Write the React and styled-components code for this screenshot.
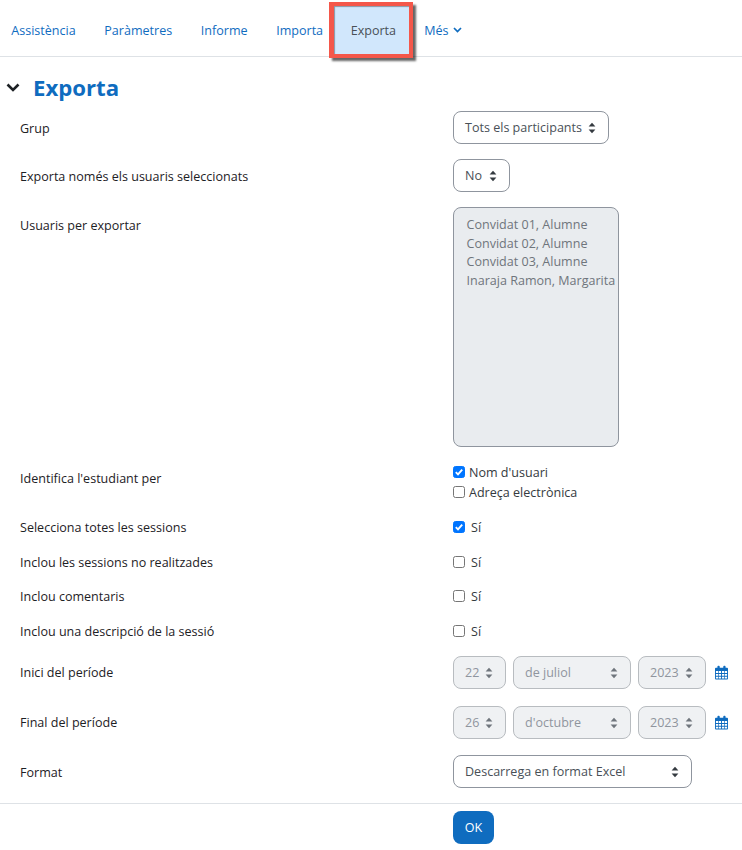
import React from 'react';
import styled, { createGlobalStyle } from 'styled-components';

const GlobalStyle = createGlobalStyle`
	html, body {
		margin: 0;
		padding: 0;
		background: #fff;
	}
	body {
		font-family: "Open Sans", "Liberation Sans", sans-serif;
		font-size: 12.55px;
		color: #1d2125;
	}
`;

const Page = styled.div`
	width: 742px;
	height: 850px;
	overflow: hidden;
`;

const Nav = styled.nav`
	display: flex;
	align-items: stretch;
	height: 57px;
	box-sizing: border-box;
	border-bottom: 1px solid #dee2e6;
`;

const Tab = styled.a`
	display: flex;
	align-items: center;
	gap: 5px;
	padding: 4px 14.3px 0 ${(p) => p.$left || 14.3}px;
	color: #0f6cbf;
	white-space: nowrap;
`;

const ActiveTab = styled(Tab)`
	justify-content: center;
	box-sizing: border-box;
	width: 84px;
	height: 56px;
	margin: 2px -3.5px 0 -8px;
	padding: 0 0 0 3px;
	background: #d1e7fc;
	border: 4px solid #f4574a;
	border-left-width: 5px;
	box-shadow: 3px 3px 2px rgba(0, 0, 0, 0.6), inset 1px 1px 1px rgba(0, 0, 0, 0.35);
	color: #495057;
	position: relative;
`;

const Header = styled.div`
	display: flex;
	align-items: center;
	gap: 13px;
	height: 48px;
	padding: 6px 0 0 6px;
`;

const Title = styled.h3`
	margin: 0;
	font-size: 22.2px;
	font-weight: 700;
	color: #0f6cbf;
`;

const Form = styled.form`
	display: block;
`;

const Row = styled.div`
	display: grid;
	grid-template-columns: 433px 1fr;
	align-items: ${(p) => (p.$top ? 'start' : 'center')};
	margin-bottom: ${(p) => p.$mb ?? 15}px;
	padding-left: 20px;
`;

const Label = styled.label`
	padding-top: ${(p) => p.$pt || 0}px;
	padding-bottom: ${(p) => p.$pb || 0}px;
	white-space: nowrap;
`;

const Select = styled.div`
	display: flex;
	align-items: center;
	justify-content: space-between;
	box-sizing: border-box;
	width: ${(p) => p.$w}px;
	height: 33px;
	padding: 0 12px 0 11px;
	border: 1px solid ${(p) => (p.$off ? '#b8bcc0' : '#8f959e')};
	border-radius: 8px;
	background: ${(p) => (p.$off ? '#eff1f3' : '#fff')};
	color: ${(p) => (p.$off ? '#8f959e' : '#495057')};
	white-space: nowrap;
`;

const CaretIcon = styled.svg`
	width: 8px;
	height: 12px;
	flex: none;
	color: ${(p) => (p.$off ? '#6f757c' : '#343a40')};
`;

const ListBox = styled.div`
	box-sizing: border-box;
	width: 166px;
	height: 240px;
	padding: 8px 0 0 12.5px;
	border: 1px solid #8f959e;
	border-radius: 8px;
	background: #e9ecef;
	color: #6f757c;
	line-height: 18.7px;
	white-space: nowrap;
	overflow: hidden;
`;

const CheckStack = styled.div`
	display: flex;
	flex-direction: column;
	gap: 2px;
`;

const CheckLine = styled.div`
	display: flex;
	align-items: center;
	gap: ${(p) => p.$gap || 4}px;
	height: 18px;
	color: #343a40;
`;

const Box = styled.span`
	display: flex;
	align-items: center;
	justify-content: center;
	box-sizing: border-box;
	width: 12px;
	height: 12px;
	border-radius: 2.5px;
	border: 1px solid ${(p) => (p.$on ? '#0075ff' : '#767676')};
	background: ${(p) => (p.$on ? '#0075ff' : '#fff')};
`;

const DateGroup = styled.div`
	display: flex;
	align-items: center;
	gap: 7px;
`;

const CalendarIcon = styled.svg`
	width: 13px;
	height: 15px;
	margin-left: 2px;
	color: #0f6cbf;
`;

const Footer = styled.div`
	border-top: 1px solid #dee2e6;
	padding: 7px 0 0 453px;
`;

const OkButton = styled.button`
	width: 41px;
	height: 33px;
	padding: 0;
	border: 0;
	border-radius: 8px;
	background: #0f6cbf;
	color: #fff;
	font: inherit;
`;

function Caret({ off }) {
	return (
		<CaretIcon $off={off} viewBox="0 0 8 12">
			<path d="M4 .8 7.4 4.6H.6zM4 11.2.6 7.4h6.8z" fill="currentColor" />
		</CaretIcon>
	);
}

function Dropdown({ width, off, children }) {
	return (
		<Select $w={width} $off={off}>
			<span>{children}</span>
			<Caret off={off} />
		</Select>
	);
}

function Check({ on, gap, children }) {
	return (
		<CheckLine $gap={gap}>
			<Box $on={on}>
				{on && (
					<svg width="10" height="10" viewBox="0 0 10 10">
						<path d="M1.8 5.2 4 7.4 8.2 2.6" fill="none" stroke="#fff" strokeWidth="1.9" />
					</svg>
				)}
			</Box>
			{children}
		</CheckLine>
	);
}

function Calendar() {
	return (
		<CalendarIcon viewBox="0 0 14 15">
			<path
				fill="currentColor"
				d="M1 2.5h1.6V1.2a1 1 0 0 1 1-1h.5a1 1 0 0 1 1 1v1.3h3.8V1.2a1 1 0 0 1 1-1h.5a1 1 0 0 1 1 1v1.3H13a1 1 0 0 1 1 1V14a1 1 0 0 1-1 1H1a1 1 0 0 1-1-1V3.5a1 1 0 0 1 1-1z"
			/>
			<path
				fill="#fff"
				d="M1 6h2.6v2H1zM4.3 6h2.2v2H4.3zM7.5 6h2.2v2H7.5zM10.4 6H13v2h-2.6zM1 9h2.6v2H1zM4.3 9h2.2v2H4.3zM7.5 9h2.2v2H7.5zM10.4 9H13v2h-2.6zM1 12h2.6v2H1zM4.3 12h2.2v2H4.3zM7.5 12h2.2v2H7.5zM10.4 12H13v2h-2.6z"
			/>
		</CalendarIcon>
	);
}

function DateRow({ label, day, month, mb }) {
	return (
		<Row $mb={mb}>
			<Label>{label}</Label>
			<DateGroup>
				<Dropdown width={53} off>{day}</Dropdown>
				<Dropdown width={118} off>{month}</Dropdown>
				<Dropdown width={68} off>2023</Dropdown>
				<Calendar />
			</DateGroup>
		</Row>
	);
}

export default function App() {
	const students = [
		'Convidat 01, Alumne',
		'Convidat 02, Alumne',
		'Convidat 03, Alumne',
		'Inaraja Ramon, Margarita',
	];
	return (
		<Page>
			<GlobalStyle />
			<Nav>
				<Tab $left={11.3}>Assistència</Tab>
				<Tab>Paràmetres</Tab>
				<Tab>Informe</Tab>
				<Tab>Importa</Tab>
				<ActiveTab>Exporta</ActiveTab>
				<Tab>
					Més
					<svg width="9" height="6" viewBox="0 0 9 6">
						<path d="M1 1l3.5 3.5L8 1" fill="none" stroke="currentColor" strokeWidth="1.7" />
					</svg>
				</Tab>
			</Nav>
			<Header>
				<svg width="14" height="9" viewBox="0 0 14 9">
					<path d="M1.5 1.5 7 7l5.5-5.5" fill="none" stroke="#1d2125" strokeWidth="2.6" />
				</svg>
				<Title>Exporta</Title>
			</Header>
			<Form>
				<Row>
					<Label $pt={2}>Grup</Label>
					<Dropdown width={156}>Tots els participants</Dropdown>
				</Row>
				<Row>
					<Label $pt={2}>Exporta només els usuaris seleccionats</Label>
					<Dropdown width={57}>No</Dropdown>
				</Row>
				<Row $top $mb={16}>
					<Label $pt={10}>Usuaris per exportar</Label>
					<ListBox>
						{students.map((name) => (
							<div key={name}>{name}</div>
						))}
					</ListBox>
				</Row>
				<Row $mb={17}>
					<Label $pb={8}>Identifica l'estudiant per</Label>
					<CheckStack>
						<Check on>Nom d'usuari</Check>
						<Check>Adreça electrònica</Check>
					</CheckStack>
				</Row>
				<Row $mb={17}>
					<Label>Selecciona totes les sessions</Label>
					<Check on gap={6}>Sí</Check>
				</Row>
				<Row $mb={16}>
					<Label>Inclou les sessions no realitzades</Label>
					<Check gap={6}>Sí</Check>
				</Row>
				<Row $mb={17}>
					<Label>Inclou comentaris</Label>
					<Check gap={6}>Sí</Check>
				</Row>
				<Row $mb={16}>
					<Label>Inclou una descripció de la sessió</Label>
					<Check gap={6}>Sí</Check>
				</Row>
				<DateRow label="Inici del període" day="22" month="de juliol" mb={17} />
				<DateRow label="Final del període" day="26" month="d'octubre" mb={16} />
				<Row>
					<Label $pt={2}>Format</Label>
					<Dropdown width={239}>Descarrega en format Excel</Dropdown>
				</Row>
				<Footer>
					<OkButton type="button">OK</OkButton>
				</Footer>
			</Form>
		</Page>
	);
}
